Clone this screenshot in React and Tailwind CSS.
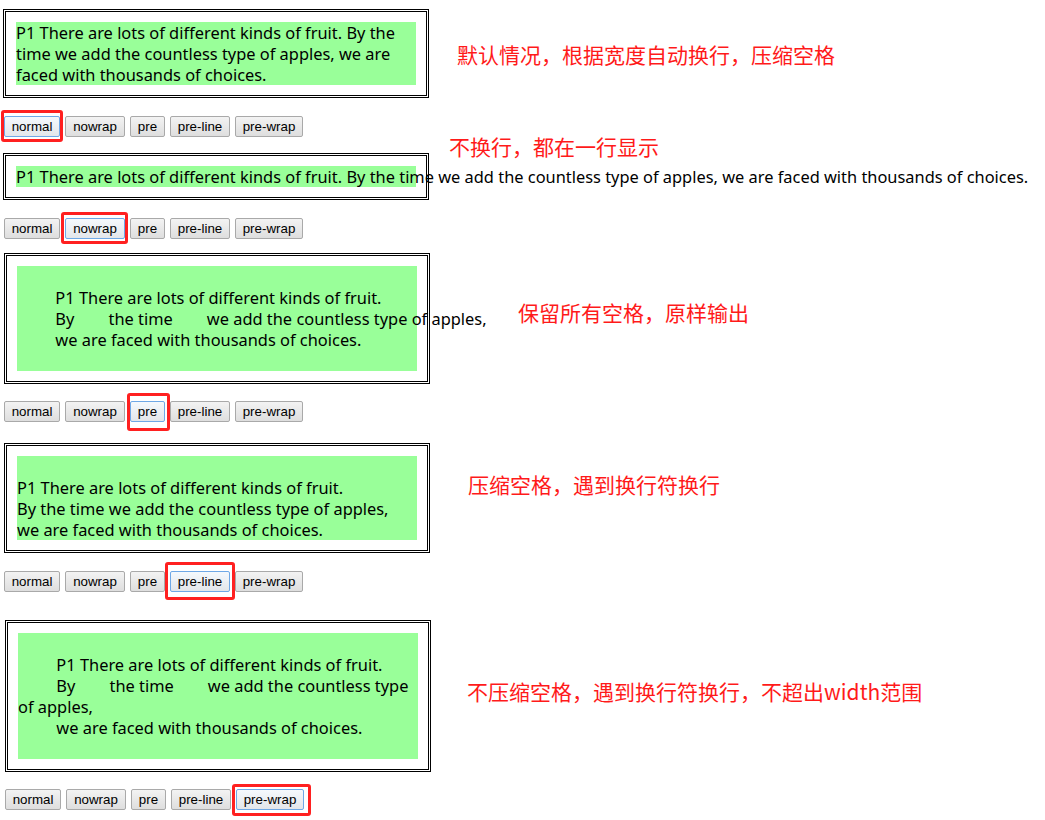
const I = " ".repeat(9);
const G = " ".repeat(8);
const TEXT = `\n${I}P1 There are lots of different kinds of fruit.\n${I}By${G}the time${G}we add the countless type of apples,\n${I}we are faced with thousands of choices.\n    `;

const MODES = [
  { label: "normal", w: "w-[56px]" },
  { label: "nowrap", w: "w-[60px]" },
  { label: "pre", w: "w-[35px]" },
  { label: "pre-line", w: "w-[60px]" },
  { label: "pre-wrap", w: "w-[68px]" },
];

function Box({ ws, className }) {
  return (
    <div className={`w-[426px] border-[3px] border-double border-black p-[10px] ${className}`}>
      <p
        className={`m-0 w-[400px] bg-[#99ff99] text-[16.4px] leading-[21px] text-black ${ws}`}
        style={{ fontFamily: '"Noto Sans", sans-serif' }}
      >
        {TEXT}
      </p>
    </div>
  );
}

function Buttons({ selected, redClass, className }) {
  return (
    <div className={`flex h-[21px] items-start gap-[5px] ${className}`}>
      {MODES.map((m, i) => {
        const sel = i === selected;
        return (
          <div key={m.label} className="relative flex">
            <button
              className={`flex h-[21px] ${m.w} items-center justify-center rounded-[2px] border text-[13.33px] leading-none text-black ${
                sel
                  ? "border-[#6fa8e6] bg-gradient-to-b from-[#f5f9fd] to-[#e3e6ea]"
                  : "border-[#a9a9a9] bg-gradient-to-b from-[#f3f3f3] to-[#dedede]"
              }`}
              style={{ fontFamily: '"Liberation Sans", Arial, sans-serif' }}
            >
              {m.label}
            </button>
            {sel && (
              <span className={`pointer-events-none absolute rounded-[3px] border-[3px] border-[#ff2020] ${redClass}`} />
            )}
          </div>
        );
      })}
    </div>
  );
}

function Note({ children, className }) {
  return (
    <div
      className={`absolute whitespace-nowrap text-[21px] leading-none text-[#ff1a1a] ${className}`}
      style={{ fontFamily: '"Noto Sans CJK SC", "Noto Sans", sans-serif' }}
    >
      {children}
    </div>
  );
}

export default function App() {
  return (
    <div className="relative h-[820px] w-[1045px] overflow-hidden bg-white">
      <div className="flex flex-col items-start">
        <Box ws="whitespace-normal" className="ml-[3px] mt-[9px]" />
        <Buttons selected={0} redClass="-left-[3px] -right-[3px] -top-[6px] -bottom-[5px]" className="ml-[4px] mt-[18px]" />

        <Box ws="whitespace-nowrap" className="ml-[3px] mt-[16px]" />
        <Buttons selected={1} redClass="-left-[4px] -right-[3px] -top-[6px] -bottom-[5px]" className="ml-[4px] mt-[18px]" />

        <Box ws="whitespace-pre" className="ml-[4px] mt-[14px]" />
        <Buttons selected={2} redClass="-left-[3px] -right-[5px] -top-[8px] -bottom-[9px]" className="ml-[4px] mt-[17px]" />

        <Box ws="whitespace-pre-line" className="ml-[4px] mt-[21px]" />
        <Buttons selected={3} redClass="-left-[5px] -right-[5px] -top-[9px] -bottom-[8px]" className="ml-[4px] mt-[18px]" />

        <Box ws="whitespace-pre-wrap" className="ml-[5px] mt-[28px]" />
        <Buttons selected={4} redClass="-left-[4px] -right-[7px] -top-[5px] -bottom-[6px]" className="ml-[5px] mt-[17px]" />
      </div>

      <Note className="left-[457px] top-[44px]">默认情况，根据宽度自动换行，压缩空格</Note>
      <Note className="left-[449px] top-[136px]">不换行，都在一行显示</Note>
      <Note className="left-[518px] top-[302px]">保留所有空格，原样输出</Note>
      <Note className="left-[468px] top-[474px]">压缩空格，遇到换行符换行</Note>
      <Note className="left-[467px] top-[681px]">不压缩空格，遇到换行符换行，不超出width范围</Note>
    </div>
  );
}
